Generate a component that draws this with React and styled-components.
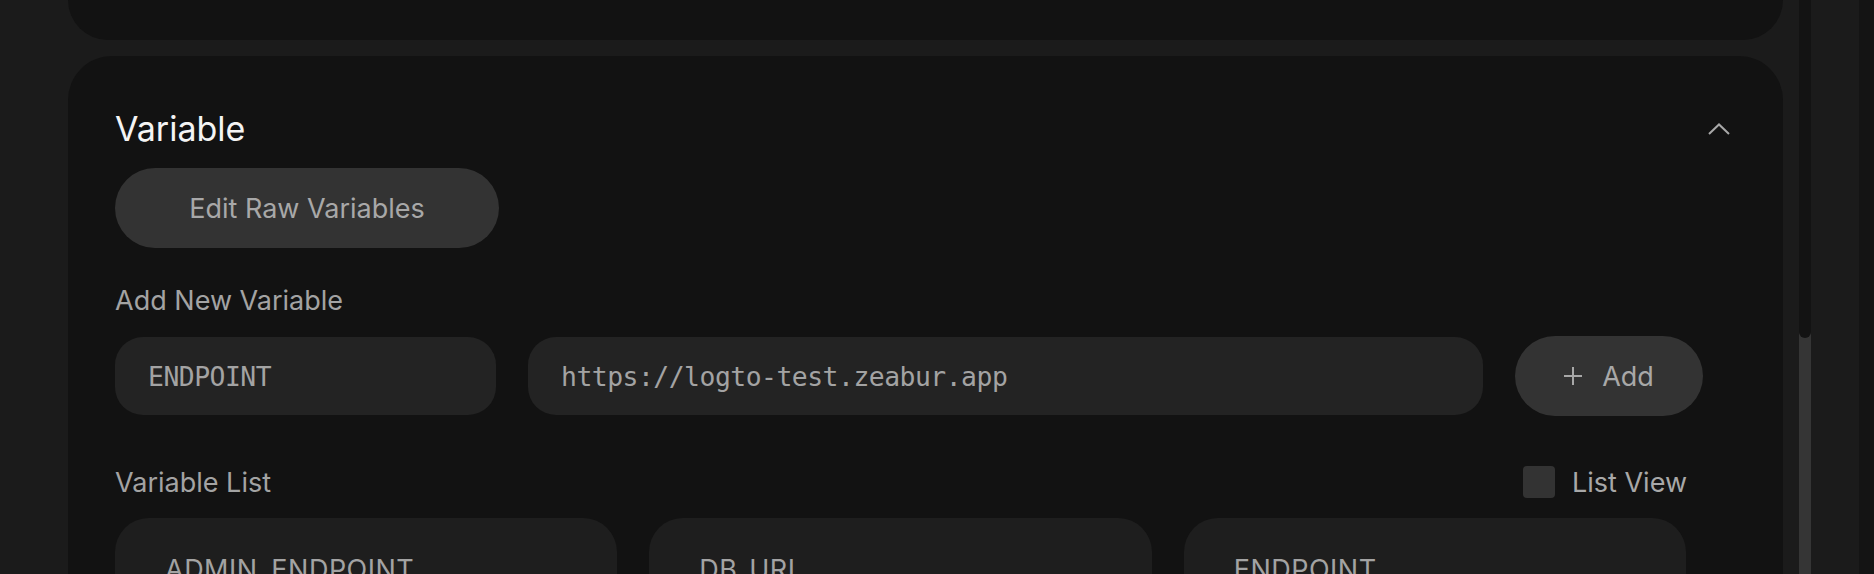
import React from 'react';
import styled, { createGlobalStyle } from 'styled-components';

const GlobalStyle = createGlobalStyle`
	html, body {
		margin: 0;
		padding: 0;
		background: #1b1b1b;
	}
	body {
		font-family: Inter, "Noto Sans", sans-serif;
	}
	* {
		box-sizing: border-box;
	}
`;

const Page = styled.div`
	display: flex;
	height: 574px;
	overflow: hidden;
	background: #1b1b1b;
`;

const Main = styled.div`
	display: flex;
	flex-direction: column;
	gap: 16px;
	width: 1783px;
	flex: none;
	padding-left: 68px;
`;

const TopCard = styled.div`
	height: 40px;
	flex: none;
	background: #121212;
	border-radius: 0 0 44px 44px;
`;

const Section = styled.section`
	flex: none;
	background: #121212;
	border-radius: 44px 44px 0 0;
	padding: 53px 48px 0 47px;
	height: 600px;
`;

const Header = styled.div`
	display: flex;
	align-items: center;
	justify-content: space-between;
	padding-right: 5px;
`;

const Title = styled.h2`
	margin: 0;
	font-size: 34px;
	line-height: 40px;
	font-weight: 400;
	color: #f4f4f4;
`;

const PillButton = styled.button`
	display: flex;
	align-items: center;
	justify-content: center;
	gap: 20px;
	height: 80px;
	width: ${p => p.$width}px;
	border: none;
	border-radius: 40px;
	background: #333333;
	color: #a8a8a8;
	font-family: Inter, "Noto Sans", sans-serif;
	font-size: 27px;
	padding: 0;
	cursor: pointer;
	flex: none;
`;

const RawButton = styled(PillButton)`
	margin-top: 19px;
`;

const Label = styled.div`
	font-size: 27px;
	line-height: 31px;
	color: #a3a3a3;
	margin-top: ${p => p.$top}px;
`;

const InputRow = styled.div`
	display: flex;
	align-items: center;
	gap: 32px;
	margin-top: 20px;
	margin-right: 32px;
`;

const Field = styled.div`
	display: flex;
	align-items: center;
	height: 78px;
	border-radius: 28px;
	background: #232323;
	padding-left: 33px;
	color: #a3a3a3;
	font-family: "DejaVu Sans Mono", "Liberation Mono", monospace;
	font-size: 26.4px;
	letter-spacing: -0.5px;
	width: ${p => (p.$width ? `${p.$width}px` : 'auto')};
	flex: ${p => (p.$width ? 'none' : '1')};
`;

const ListHead = styled.div`
	display: flex;
	align-items: center;
	justify-content: space-between;
	margin-top: 50px;
	margin-right: 48px;
`;

const CheckLabel = styled.label`
	display: flex;
	align-items: center;
	gap: 17px;
	font-size: 27px;
	line-height: 31px;
	color: #a8a8a8;
`;

const Box = styled.span`
	width: 32px;
	height: 32px;
	border-radius: 4px;
	background: #333333;
`;

const Grid = styled.div`
	display: grid;
	grid-template-columns: repeat(3, 1fr);
	gap: 32px;
	margin-top: 20px;
	margin-right: 49px;
`;

const VarCard = styled.div`
	background: #1e1e1e;
	border-radius: 34px;
	padding: 36px 48px 36px 50px;
	height: 200px;
	font-size: 27px;
	line-height: 32px;
	letter-spacing: 0.5px;
	color: #a3a3a3;
`;

const Gutter = styled.div`
	width: 16px;
	flex: none;
`;

const Track = styled.div`
	width: 12px;
	flex: none;
	background: #353535;
`;

const Thumb = styled.div`
	height: 338px;
	background: #131313;
	border-radius: 0 0 6px 6px;
`;

const Side = styled.div`
	width: 48px;
	flex: none;
`;

const Edge = styled.div`
	flex: 1;
	background: #141414;
`;

const Chevron = () => (
	<svg width="22" height="12" viewBox="0 0 22 12" fill="none">
		<polyline points="1,11 11,1.5 21,11" stroke="#a8a8a8" strokeWidth="2" />
	</svg>
);

const Plus = () => (
	<svg width="18" height="18" viewBox="0 0 18 18" fill="none">
		<path d="M9 0v18M0 9h18" stroke="#a8a8a8" strokeWidth="2" />
	</svg>
);

const vars = ['ADMIN_ENDPOINT', 'DB_URL', 'ENDPOINT'];

export default function App() {
	return (
		<>
			<GlobalStyle />
			<Page>
				<Main>
					<TopCard />
					<Section>
						<Header>
							<Title>Variable</Title>
							<Chevron />
						</Header>
						<RawButton $width={384}>Edit Raw Variables</RawButton>
						<Label $top={37}>Add New Variable</Label>
						<InputRow>
							<Field $width={381}>ENDPOINT</Field>
							<Field>https://logto-test.zeabur.app</Field>
							<PillButton $width={188}>
								<Plus />
								Add
							</PillButton>
						</InputRow>
						<ListHead>
							<Label $top={0}>Variable List</Label>
							<CheckLabel>
								<Box />
								List View
							</CheckLabel>
						</ListHead>
						<Grid>
							{vars.map(name => (
								<VarCard key={name}>{name}</VarCard>
							))}
						</Grid>
					</Section>
				</Main>
				<Gutter />
				<Track>
					<Thumb />
				</Track>
				<Side />
				<Edge />
			</Page>
		</>
	);
}
